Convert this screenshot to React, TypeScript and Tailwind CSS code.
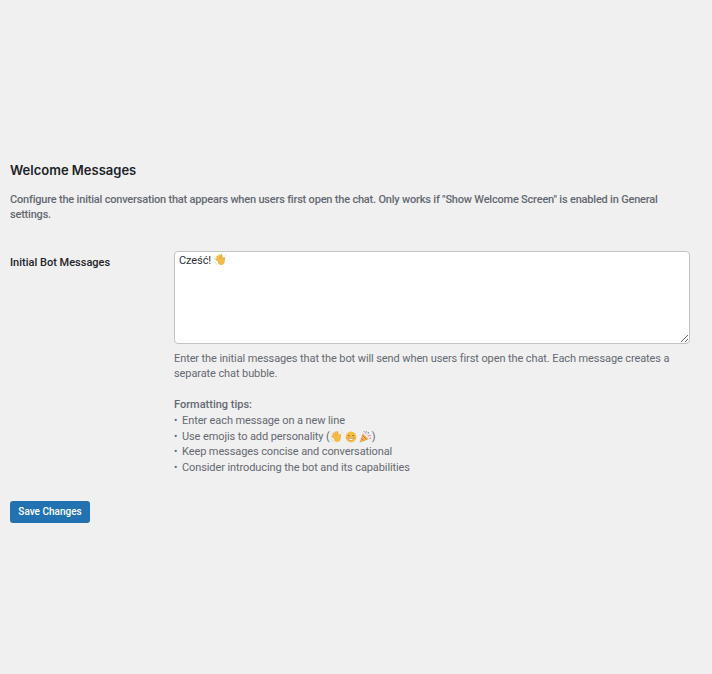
const Wave = ({ className }: { className: string }) => (
  <svg viewBox="0 0 16 16" className={className} aria-hidden="true">
    <g fill="none" stroke="#f2b03c" strokeLinecap="round" strokeWidth="2.400">
      <path d="M9 10 4 4.500" />
      <path d="M9 9.500 6.500 3" />
      <path d="M10 9 9 2.500" />
      <path d="M8 11 2.800 7.500" />
      <path d="M11.500 10.500 12.500 6" />
    </g>
    <circle cx="8.800" cy="10.600" r="4.200" fill="#f5bb45" />
    <path d="M1.200 10.800c.3 1.400 1 2.500 2.200 3.200M13.800 1.800c.6.400 1 1 1.100 1.700" fill="none" stroke="#9dbdd6" strokeWidth="0.700" />
  </svg>
)

const Smile = ({ className }: { className: string }) => (
  <svg viewBox="0 0 16 16" className={className} aria-hidden="true">
    <circle cx="8" cy="8" r="7.200" fill="#f7bd45" />
    <path d="M3.900 6.800c.6-1.100 1.900-1.100 2.500 0M9.600 6.800c.6-1.100 1.900-1.100 2.500 0" fill="none" stroke="#5b3a1e" strokeWidth="1" />
    <path d="M4.200 9.200c1.500 1 6.100 1 7.600 0-.5 2.300-2.100 3.300-3.800 3.300s-3.300-1-3.800-3.300z" fill="#fff" stroke="#8a5a24" strokeWidth="0.500" />
    <circle cx="3.400" cy="9.400" r="1.200" fill="#f09a5e" opacity="0.700" />
    <circle cx="12.600" cy="9.400" r="1.200" fill="#f09a5e" opacity="0.700" />
  </svg>
)

const Party = ({ className }: { className: string }) => (
  <svg viewBox="0 0 16 16" className={className} aria-hidden="true">
    <path d="M1 15 4.800 4.500l6.700 6.700z" fill="#eeb84a" stroke="#c98a2e" strokeWidth="0.400" />
    <path d="M3 10 6 13.300M4.200 6.800 9.200 11.800" stroke="#d9503f" strokeWidth="1" />
    <path d="M8 4.500c.8-1 .5-2 1.200-3.200M11 7.500c1-.8 2-.4 3.500-1" fill="none" stroke="#d65a9b" strokeWidth="1" />
    <circle cx="11.500" cy="3.500" r="1" fill="#4f9bd9" />
    <circle cx="13.800" cy="10" r="0.900" fill="#e5574b" />
    <circle cx="6.200" cy="2" r="0.800" fill="#67b45a" />
    <circle cx="10" cy="6" r="0.700" fill="#f0c23f" />
  </svg>
)

const Tip = ({ children }: { children: React.ReactNode }) => (
  <li className="flex items-center">
    <span className="w-[8px] shrink-0 text-[10px]">•</span>
    {children}
  </li>
)

export default function App() {
  return (
    <div className="min-h-[674px] bg-[#f0f0f1] pl-[10px] pr-[22px] pt-[162px] font-['Roboto',sans-serif] text-[11px] leading-[15px] text-[#646970]">
      <h2 className="font-['Inter',sans-serif] text-[13px] font-semibold leading-[17px] text-[#1d2327]">Welcome Messages</h2>
      <p className="mt-[12.500px] font-medium tracking-[-0.2px]">
        Configure the initial conversation that appears when users first open the chat. Only works if "Show Welcome
        Screen" is enabled in General settings.
      </p>

      <div className="mt-[29px] flex items-start">
        <label className="mt-[4px] w-[164px] shrink-0 font-medium text-[#1d2327]">Initial Bot Messages</label>
        <div className="min-w-0 flex-1 tracking-[-0.1px]">
          <div className="relative h-[93px]">
            <textarea
              readOnly
              defaultValue="Cześć!"
              className="block h-[93px] w-full rounded-[4px] border border-[#c3c4c7] bg-white px-[4px] py-[1px] text-[11px] leading-[15px] text-[#2c3338] outline-none"
            />
            <Wave className="absolute left-[40px] top-[2px] h-[13px] w-[13px]" />
          </div>
          <p className="mt-[7px]">
            Enter the initial messages that the bot will send when users first open the chat. Each message creates a
            separate chat bubble.
          </p>
          <p className="mt-[16.500px] font-medium tracking-normal">Formatting tips:</p>
          <ul className="mt-[1px] leading-[15.700px]">
            <Tip>Enter each message on a new line</Tip>
            <Tip>
              <span className="whitespace-pre">Use emojis to add personality (</span>
              <Wave className="h-[13px] w-[13px]" />
              <Smile className="ml-[2px] h-[12px] w-[12px]" />
              <Party className="ml-[2px] h-[13px] w-[13px]" />
              <span>)</span>
            </Tip>
            <Tip>Keep messages concise and conversational</Tip>
            <Tip>Consider introducing the bot and its capabilities</Tip>
          </ul>
        </div>
      </div>

      <button className="mt-[25px] block h-[22px] w-[80px] rounded-[3px] bg-[#2271b1] text-[10px] font-medium text-white">
        Save Changes
      </button>
    </div>
  )
}
